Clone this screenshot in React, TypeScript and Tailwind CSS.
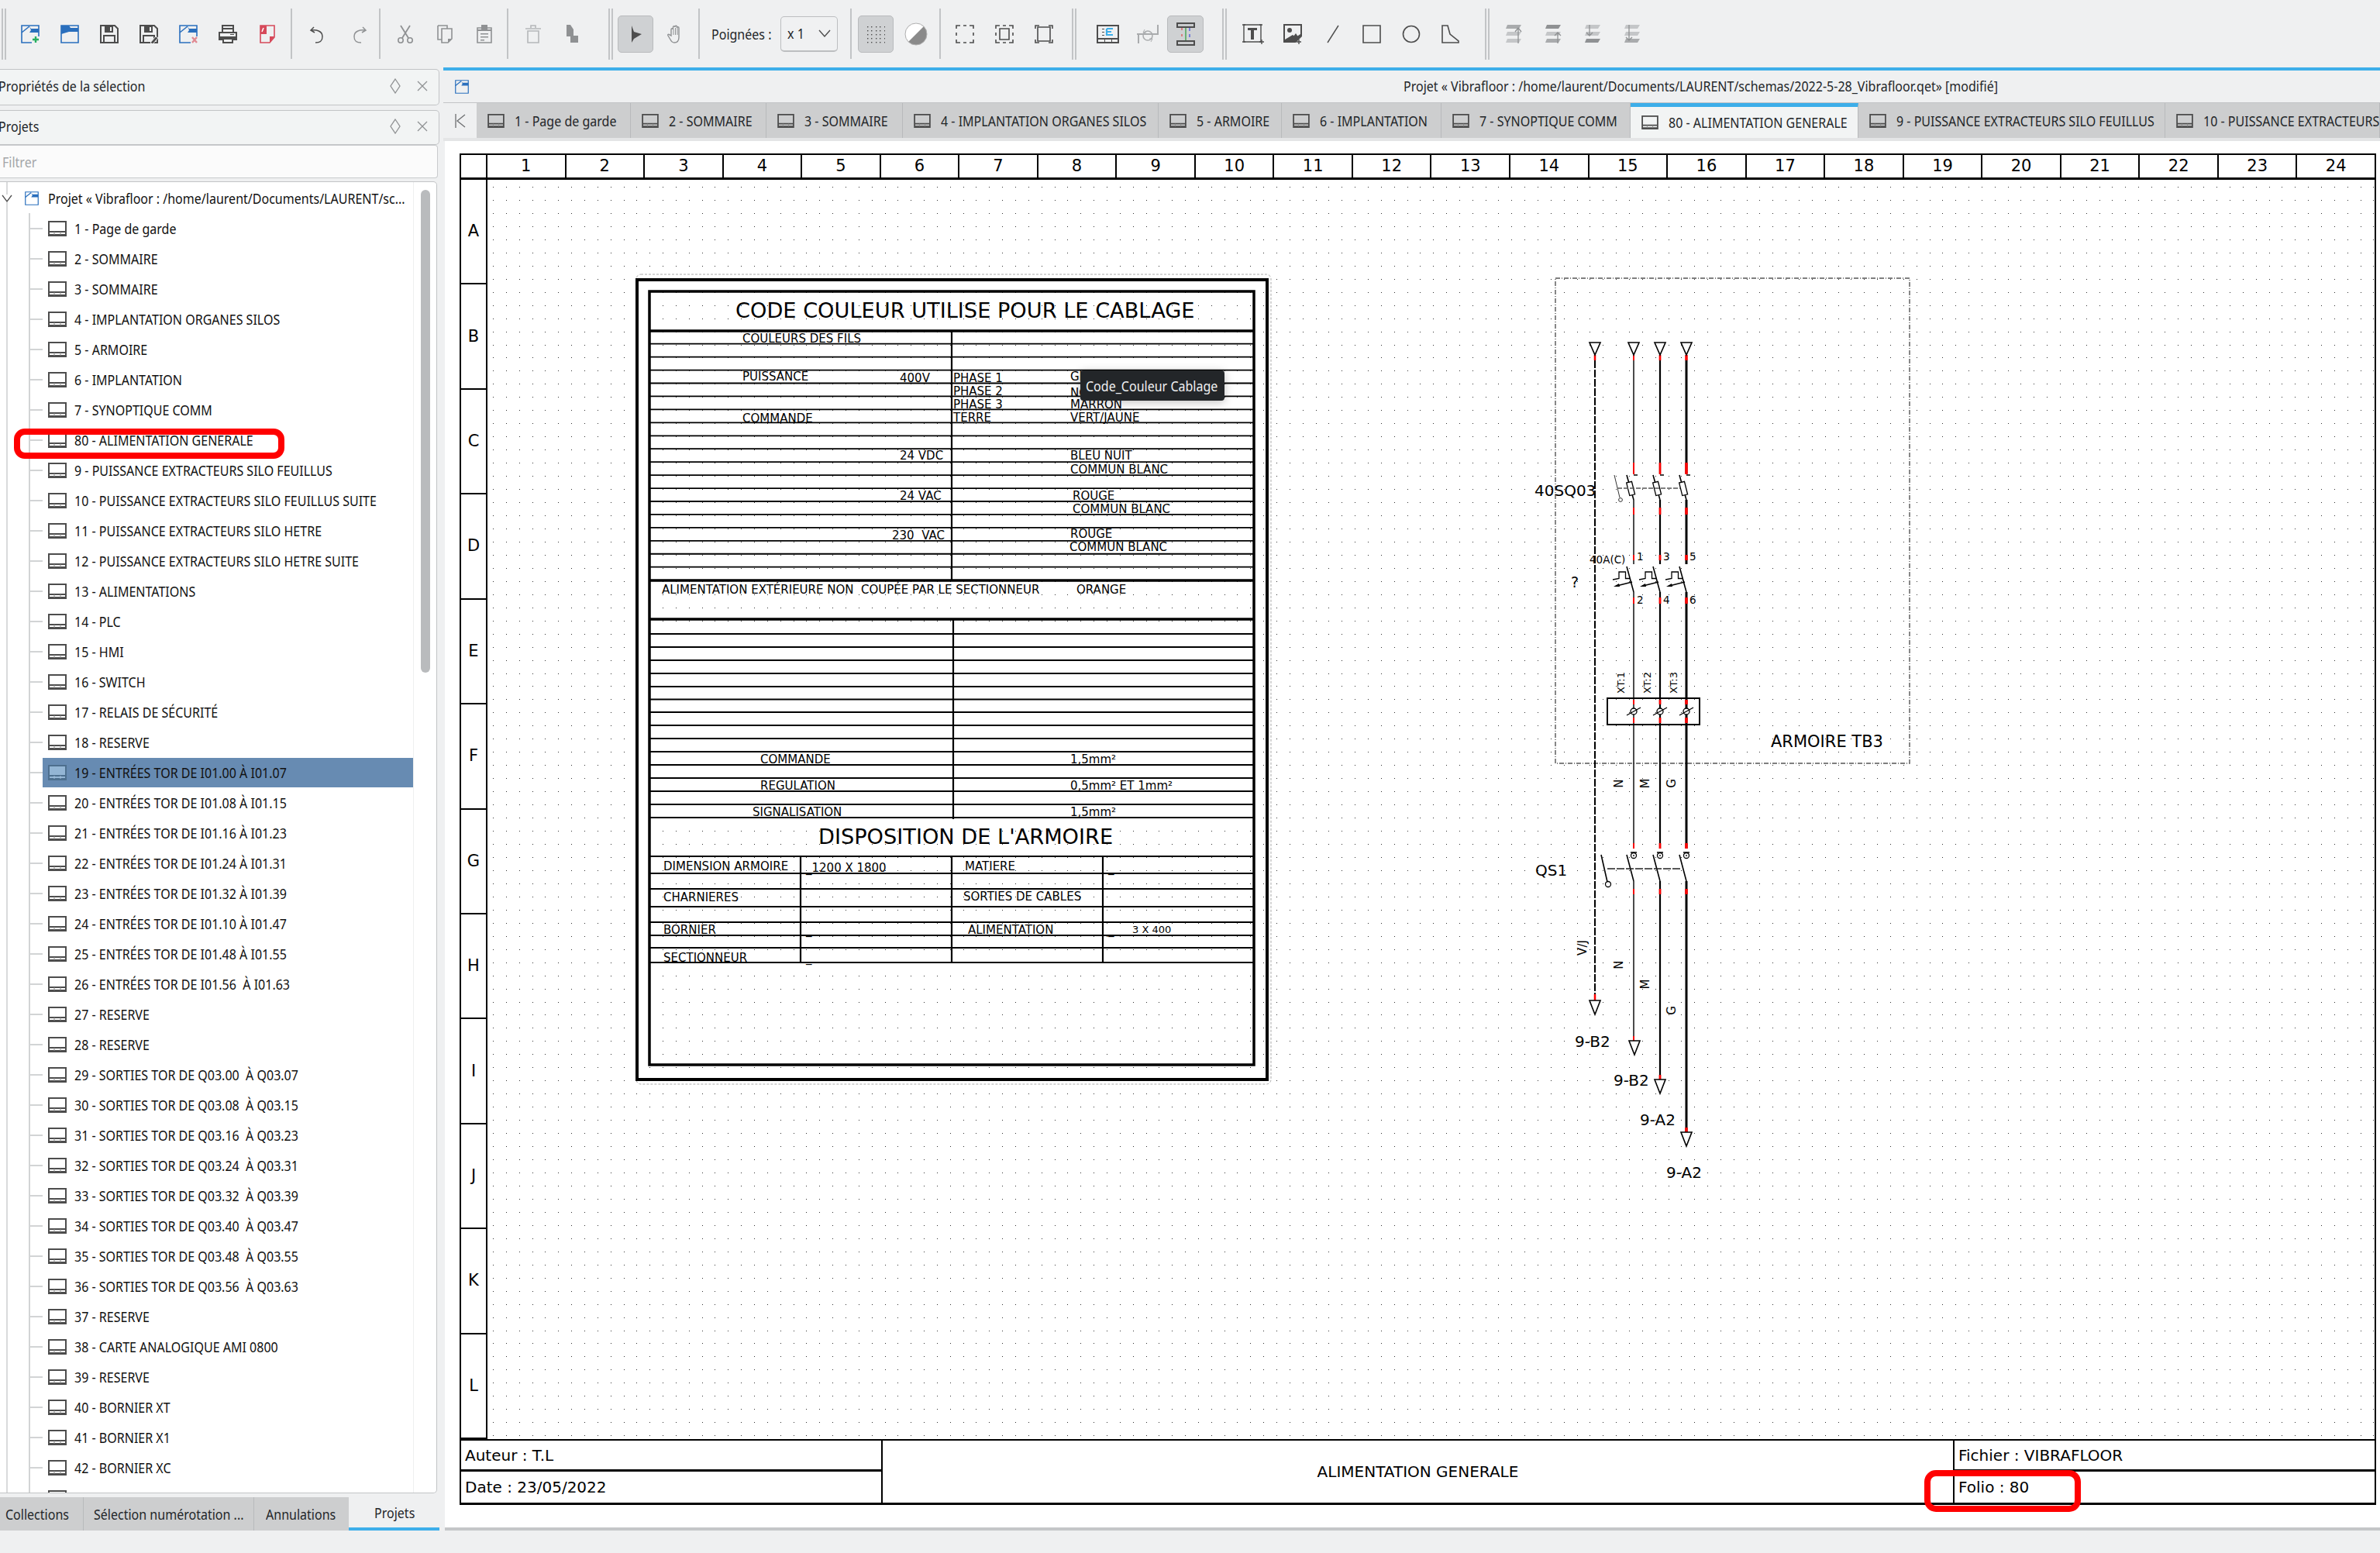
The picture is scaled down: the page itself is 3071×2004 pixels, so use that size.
import React from "react";

const PAGES = [
  "1 - Page de garde", "2 - SOMMAIRE", "3 - SOMMAIRE", "4 - IMPLANTATION ORGANES SILOS", "5 - ARMOIRE", "6 - IMPLANTATION",
  "7 - SYNOPTIQUE COMM", "80 - ALIMENTATION GENERALE", "9 - PUISSANCE EXTRACTEURS SILO FEUILLUS",
  "10 - PUISSANCE EXTRACTEURS SILO FEUILLUS SUITE", "11 - PUISSANCE EXTRACTEURS SILO HETRE",
  "12 - PUISSANCE EXTRACTEURS SILO HETRE SUITE", "13 - ALIMENTATIONS", "14 - PLC", "15 - HMI", "16 - SWITCH",
  "17 - RELAIS DE SÉCURITÉ", "18 - RESERVE", "19 - ENTRÉES TOR DE I01.00 À I01.07", "20 - ENTRÉES TOR DE I01.08 À I01.15",
  "21 - ENTRÉES TOR DE I01.16 À I01.23", "22 - ENTRÉES TOR DE I01.24 À I01.31", "23 - ENTRÉES TOR DE I01.32 À I01.39",
  "24 - ENTRÉES TOR DE I01.10 À I01.47", "25 - ENTRÉES TOR DE I01.48 À I01.55", "26 - ENTRÉES TOR DE I01.56  À I01.63",
  "27 - RESERVE", "28 - RESERVE", "29 - SORTIES TOR DE Q03.00  À Q03.07", "30 - SORTIES TOR DE Q03.08  À Q03.15",
  "31 - SORTIES TOR DE Q03.16  À Q03.23", "32 - SORTIES TOR DE Q03.24  À Q03.31", "33 - SORTIES TOR DE Q03.32  À Q03.39",
  "34 - SORTIES TOR DE Q03.40  À Q03.47", "35 - SORTIES TOR DE Q03.48  À Q03.55", "36 - SORTIES TOR DE Q03.56  À Q03.63",
  "37 - RESERVE", "38 - CARTE ANALOGIQUE AMI 0800", "39 - RESERVE", "40 - BORNIER XT", "41 - BORNIER X1", "42 - BORNIER XC", "",
];

const TABS: [string, string][] = [
  ["1 - Page de garde", "w-[199px]"], ["2 - SOMMAIRE", "w-[175px]"], ["3 - SOMMAIRE", "w-[176px]"],
  ["4 - IMPLANTATION ORGANES SILOS", "w-[330px]"], ["5 - ARMOIRE", "w-[159px]"], ["6 - IMPLANTATION", "w-[206px]"],
  ["7 - SYNOPTIQUE COMM", "w-[244px]"], ["80 - ALIMENTATION GENERALE", "w-[294px]"],
  ["9 - PUISSANCE EXTRACTEURS SILO FEUILLUS", "w-[396px]"], ["10 - PUISSANCE EXTRACTEURS SILO FEUILLUS SUITE", "w-[277px]"],
];

// labels of the colour table: x, baseline, text
const TABLE_TEXT: [number, number, string][] = [
  [958, 441, "COULEURS DES FILS"], [958, 490, "PUISSANCE"], [1161, 492, "400V"], [1230, 492, "PHASE 1"], [1381, 490, "GRIS"],
  [1230, 509, "PHASE 2"], [1381, 511, "NOIR"], [1230, 526, "PHASE 3"], [1381, 526, "MARRON"], [958, 544, "COMMANDE"],
  [1230, 543, "TERRE"], [1381, 543, "VERT/JAUNE"], [1161, 592, "24 VDC"], [1381, 592, "BLEU NUIT"], [1381, 610, "COMMUN BLANC"],
  [1161, 644, "24 VAC"], [1384, 644, "ROUGE"], [1384, 661, "COMMUN BLANC"], [1151, 695, "230  VAC"], [1381, 693, "ROUGE"],
  [1380, 710, "COMMUN BLANC"], [854, 765, "ALIMENTATION EXTÉRIEURE NON  COUPÉE PAR LE SECTIONNEUR"], [1389, 765, "ORANGE"],
  [981, 984, "COMMANDE"], [1381, 984, "1,5mm²"], [981, 1018, "REGULATION"], [1381, 1018, "0,5mm² ET 1mm²"],
  [971, 1052, "SIGNALISATION"], [1381, 1052, "1,5mm²"], [856, 1122, "DIMENSION ARMOIRE"], [1040, 1124, "_1200 X 1800"],
  [1245, 1122, "MATIERE"], [1430, 1124, "_"], [856, 1162, "CHARNIERES"], [1040, 1165, "_"], [1243, 1161, "SORTIES DE CABLES"],
  [1430, 1165, "_"], [856, 1204, "BORNIER"], [1040, 1204, "_"], [1249, 1204, "ALIMENTATION"], [1430, 1204, "_"],
  [1461, 1203, "3 X 400"], [856, 1240, "SECTIONNEUR"], [1040, 1240, "_"],
];

const ROW_LINES = [
  ...Array.from({ length: 18 }, (_, i) => 442.7 + i * 16.94),
  817, 834, 851, 868, 885, 901.5, 918, 935, 952, 969, 986, 1003, 1020, 1037, 1054, 1126, 1146, 1169, 1189, 1206, 1222, 1241,
];

const DOTS = (() => {
  let d = "";
  for (let i = 0; i < 145; i++) {
    for (let j = 0; j < 96; j++) {
      d += `M${Math.round(636 + i * 16.85)} ${Math.round(240 + j * 16.96)}h1v1h-1z`;
    }
  }
  return d;
})();

const Txt = ({ children, className = "" }: { children: React.ReactNode; className?: string }) => (
  <span className={`inline-block origin-left scale-x-[0.89] whitespace-pre text-[18px] leading-[24px] font-['Noto_Sans',sans-serif] ${className}`}>
    {children}
  </span>
);

const PageIcon = ({ selected = false, small = false }: { selected?: boolean; small?: boolean }) => (
  <svg viewBox="0 0 24 20" className={small ? "w-[22px] h-[18px] shrink-0" : "w-[24px] h-[20px] shrink-0"}>
    <rect x="1" y="1" width="22" height="18" fill={selected ? "#93b5d4" : "none"} stroke={selected ? "#4d6f8e" : "#4d4d4d"} strokeWidth="2" />
    <path d="M1 14h22M1 18h22" stroke={selected ? "#4d6f8e" : "#4d4d4d"} strokeWidth="2" />
    <path d="M8 14v4M16 14v4" stroke={selected ? "#9fbcd6" : "#888"} strokeWidth="1" />
  </svg>
);

const I = ({ children }: { children: React.ReactNode }) => (
  <svg viewBox="0 0 24 24" className="w-[24px] h-[24px]" fill="none">{children}</svg>
);

const ProjectShape = ({ solid = false }: { solid?: boolean }) => (
  <>
    <path d="M1 1h22v22H1z" stroke="#2a6fbd" strokeWidth="1.6" fill="none" />
    <path d={solid ? "M1 1h10l2 3h10v5H11L1 12z" : "M11 2l2 3h10v5H11l2-3z"} fill="#2a6fbd" />
    {!solid && <path d="M1 10l10-8" stroke="#2a6fbd" strokeWidth="1.6" />}
  </>
);

const Floppy = () => (
  <>
    <path d="M1 1h18l4 4v18H1z" stroke="#4d4d4d" strokeWidth="2" />
    <path d="M6 1h11v9H6z" fill="#4d4d4d" />
    <path d="M13 3h2v5h-2z" fill="#eff0f1" />
    <path d="M5 23V14h14v9" stroke="#4d4d4d" strokeWidth="2" />
  </>
);

const IconNew = () => <I><ProjectShape /><path d="M14 15h10v9H14z" fill="#eff0f1" /><path d="M15 19h8M19 15v8" stroke="#27ae60" strokeWidth="2.4" /></I>;
const IconOpen = () => <I><ProjectShape solid /></I>;
const IconSave = () => <I><Floppy /></I>;
const IconSaveAs = () => <I><Floppy /><path d="M14 23l7-8 3 2-7 8z" fill="#4d4d4d" stroke="#eff0f1" /></I>;
const IconClose = () => <I><ProjectShape /><path d="M15 15h9v9h-9z" fill="#eff0f1" /><path d="M17 16l6 7M23 16l-6 7" stroke="#e08a92" strokeWidth="2.4" /></I>;
const IconPrint = () => (
  <I>
    <path d="M5 9V1h14v8M5 5h14" stroke="#4d4d4d" strokeWidth="2" />
    <path d="M0 9h24v11h-5v-3H5v3H0z" fill="#4d4d4d" />
    <path d="M2 11h20v5H2z" fill="#eff0f1" />
    <path d="M15 12h5v1h-5zM2 15h20v2H2z" fill="#4d4d4d" />
    <path d="M6 18h12v5H6z" stroke="#4d4d4d" strokeWidth="2" />
  </I>
);
const IconPdf = () => (
  <I>
    <path d="M3 1h18v15l-6 7H3z" stroke="#d6495a" strokeWidth="1.6" />
    <path d="M3 1h8v11H3zM15 15h6l-6 8z" fill="#d6495a" />
    <path d="M7 4L5 9" stroke="#fff" strokeWidth="1.5" />
  </I>
);
const IconUndo = () => (
  <I><path d="M6 3L2 7l5 3M3 7c6-1 14 1 14 8s-4 8-9 8" stroke="#4d4d4d" strokeWidth="1.5" /></I>
);
const IconRedo = () => (
  <I><path d="M18 3l4 4-5 3M21 7c-6-1-14 1-14 8s4 8 9 8" stroke="#8f9193" strokeWidth="1.5" /></I>
);
const IconCut = () => (
  <I>
    <path d="M6 1l10 16M18 1L8 17" stroke="#8f9193" strokeWidth="1.8" />
    <circle cx="6" cy="20" r="3.2" stroke="#8f9193" strokeWidth="1.6" />
    <circle cx="18" cy="20" r="3.2" stroke="#8f9193" strokeWidth="1.6" />
  </I>
);
const IconCopy = () => (
  <I>
    <path d="M3 1h12v4M3 1v18h5" stroke="#8f9193" strokeWidth="1.6" />
    <path d="M8 5h13v13l-5 5H8z" stroke="#8f9193" strokeWidth="1.6" fill="#eff0f1" />
    <path d="M16 23v-5h5z" fill="#8f9193" />
  </I>
);
const IconPaste = () => (
  <I>
    <path d="M3 4h18v19H3z" stroke="#8f9193" strokeWidth="1.6" />
    <path d="M8 0h8v6H8z" fill="#8f9193" />
    <path d="M3 6h18v2H3zM7 11h10v1.5H7zM7 15h10v1.5H7zM7 19h5v1.5H7z" fill="#8f9193" />
  </I>
);
const IconTrash = () => (
  <I>
    <path d="M2 5h20M9 4V1h6v3" stroke="#b5b7b9" strokeWidth="1.6" />
    <path d="M5 8h14v15H5z" stroke="#b5b7b9" strokeWidth="1.6" />
  </I>
);
const IconRotate = () => (
  <I>
    <path d="M4 0h5l4 6v9H4z" fill="#8f9193" />
    <path d="M9 14h10v9H9z" fill="#8f9193" />
  </I>
);
const IconPointer = () => <I><path d="M7 1v22l3-5 10-6-10-3z" fill="#4d4d4d" /></I>;
const IconHand = () => (
  <I>
    <path d="M6 14V6a1.2 1.2 0 012.5 0V3a1.2 1.2 0 012.5 0v-.5a1.2 1.2 0 012.5 0V4a1.2 1.2 0 012.5 0v12c0 4-2 7-6 7-3 0-4-2-5-4l-3-5c-1-2 1-2 2-1z" stroke="#8f9193" strokeWidth="1.4" />
    <path d="M9 6v7M11.5 4v9M14 4v9" stroke="#8f9193" strokeWidth="1" />
  </I>
);
const IconGrid = () => (
  <I>
    {[2, 7, 12, 17, 22].map((y) => [1, 6, 12, 17, 23].map((x) => <rect key={`${x}${y}`} x={x} y={y} width="1.4" height="1.4" fill="#4d4d4d" />))}
  </I>
);
const IconDisc = () => (
  <svg viewBox="0 0 30 30" className="w-[30px] h-[30px]">
    <circle cx="15" cy="15" r="14" fill="#8a8a8a" />
    <path d="M25 5A14 14 0 005 25z" fill="#fff" />
    <circle cx="15" cy="15" r="14" fill="none" stroke="#b0b0b0" />
  </svg>
);
const Corners = () => (
  <path d="M1 5V1h5M18 1h5v4M23 19v4h-5M6 23H1v-4M10 1h4M10 23h4M1 10v4M23 10v4" stroke="#4d4d4d" strokeWidth="1.6" />
);
const IconSelect = () => <I><Corners /></I>;
const IconSelectIn = () => <I><Corners /><path d="M6 5h12v14H6z" stroke="#4d4d4d" strokeWidth="1.6" /></I>;
const IconSelectFit = () => <I><path d="M1 5V1h5M18 1h5v4M23 19v4h-5M6 23H1v-4" stroke="#4d4d4d" strokeWidth="1.6" /><path d="M4 3h16v18H4z" stroke="#4d4d4d" strokeWidth="1.6" /></I>;
const IconSummary = () => (
  <svg viewBox="0 0 29 24" className="w-[29px] h-[24px]">
    <rect x="1" y="1" width="27" height="22" fill="none" stroke="#4d4d4d" strokeWidth="2" />
    <path d="M0 17h29v7H0z" fill="#4d4d4d" />
    <path d="M2 19h8v3H2zM11 19h8v3h-8zM20 19h7v3h-7z" fill="#eff0f1" />
    <path d="M13 5h8M13 5v9M13 9h6M13 13h8" stroke="#3daee9" strokeWidth="2.2" fill="none" />
    <path d="M7 5h3v1H7zM7 9h3v1H7zM7 13h3v1H7z" fill="#4d4d4d" />
  </svg>
);
const IconLink = () => (
  <svg viewBox="0 0 28 24" className="w-[28px] h-[24px]">
    <path d="M0 12h28M2 12v12M27 12V0" stroke="#a9abad" strokeWidth="2" fill="none" />
    <circle cx="14" cy="14" r="6" fill="none" stroke="#a9abad" strokeWidth="1.5" />
    <path d="M10 6l-2 4 4 0M18 22l2-4-4 0" stroke="#a9abad" strokeWidth="1" fill="none" />
  </svg>
);
const IconConductors = () => (
  <svg viewBox="0 0 26 32" className="w-[26px] h-[32px]">
    <path d="M1 1h24v7H1zM1 24h24v7H1z" fill="#4d4d4d" />
    <path d="M3 3h20v3H3zM3 26h20v3H3z" fill="#c9cbcd" />
    <path d="M8 8v16" stroke="#e03030" strokeWidth="1" strokeDasharray="3 5" />
    <path d="M13 8v16" stroke="#2a9d3a" strokeWidth="1.2" />
    <path d="M18 8v16" stroke="#2030e0" strokeWidth="1" strokeDasharray="4 4" />
  </svg>
);
const IconText = () => (
  <svg viewBox="0 0 28 28" className="w-[28px] h-[28px]">
    <path d="M2 2h22v22H2z" fill="none" stroke="#4d4d4d" strokeWidth="1.4" />
    <path d="M7 6h12v3h-4v12h-4V9H7z" fill="#4d4d4d" />
    <path d="M0 2h4M0 24h4M22 2h4M22 24h6M25 21v6" stroke="#4d4d4d" strokeWidth="1.4" />
  </svg>
);
const IconImage = () => (
  <svg viewBox="0 0 24 26" className="w-[24px] h-[26px]">
    <path d="M0 0h24v16l-8 8H0z" fill="#4d4d4d" />
    <path d="M2 2h20v11l-6 4-4-3-10 6z" fill="#eff0f1" />
    <circle cx="8" cy="8" r="3" fill="#4d4d4d" />
    <path d="M10 20l6-8 4 6" fill="#4d4d4d" />
    <path d="M20 20v6M17 23h6" stroke="#4d4d4d" strokeWidth="1.4" />
  </svg>
);
const IconLine = () => <I><path d="M6 23L20 1" stroke="#4d4d4d" strokeWidth="1.4" /></I>;
const IconRect = () => <I><path d="M1 1h22v22H1z" stroke="#4d4d4d" strokeWidth="1.6" /></I>;
const IconEllipse = () => <I><circle cx="12" cy="12" r="10.5" stroke="#4d4d4d" strokeWidth="1.6" /></I>;
const IconPolygon = () => <I><path d="M1 1h7l3 11 11 9v2H1z" stroke="#4d4d4d" strokeWidth="1.6" /></I>;
const Slab = ({ y, c }: { y: number; c: string }) => <path d={`M3 ${y}h18l-3 5H1z`} fill={c} />;
const IconRaiseTop = () => <I><Slab y={0} c="#a9abad" /><Slab y={9} c="#c4c6c8" /><Slab y={18} c="#c4c6c8" /><path d="M17 24V4M13 9l4-5 4 5" stroke="#8f9193" strokeWidth="1.3" /></I>;
const IconRaise = () => <I><Slab y={0} c="#8f9193" /><Slab y={9} c="#c4c6c8" /><Slab y={18} c="#a9abad" /><path d="M17 24V10M13 14l4-4 4 4" stroke="#8f9193" strokeWidth="1.3" /></I>;
const IconLower = () => <I><Slab y={0} c="#c4c6c8" /><Slab y={9} c="#c4c6c8" /><Slab y={18} c="#8f9193" /><path d="M7 0v14M3 10l4 4 4-4" stroke="#8f9193" strokeWidth="1.3" /></I>;
const IconLowerBottom = () => <I><Slab y={0} c="#c4c6c8" /><Slab y={9} c="#c4c6c8" /><Slab y={18} c="#a9abad" /><path d="M7 0v20M3 16l4 4 4-4" stroke="#8f9193" strokeWidth="1.3" /></I>;

const Btn = ({ children, w = "w-[51px]" }: { children: React.ReactNode; w?: string }) => (
  <div className={`${w} h-[48px] flex items-center justify-center shrink-0`}>{children}</div>
);
const Active = ({ children, w }: { children: React.ReactNode; w: string }) => (
  <div className={`${w} h-[48px] flex items-center justify-center shrink-0 rounded-[5px] bg-[#cfd1d3] border border-[#b9bbbd]`}>{children}</div>
);
const Sep = ({ className = "" }: { className?: string }) => <div className={`w-[2px] h-[65px] bg-[#c2c4c6] shrink-0 ${className}`} />;
const Sep2 = ({ className = "" }: { className?: string }) => (
  <div className={`w-[6px] h-[66px] border-x-2 border-[#c2c4c6] shrink-0 ${className}`} />
);

function Toolbar() {
  return (
    <div className="h-[87px] flex items-center shrink-0 pl-[2px]">
      <Sep2 className="mr-[5px]" />
      <Btn><IconNew /></Btn><Btn><IconOpen /></Btn><Btn><IconSave /></Btn><Btn><IconSaveAs /></Btn>
      <Btn><IconClose /></Btn><Btn><IconPrint /></Btn><Btn><IconPdf /></Btn>
      <Sep className="ml-[5px] mr-[8px]" />
      <Btn><IconUndo /></Btn><Btn><IconRedo /></Btn>
      <Sep className="ml-[2px] mr-[6px]" />
      <Btn><IconCut /></Btn><Btn><IconCopy /></Btn><Btn><IconPaste /></Btn>
      <Sep className="ml-[4px] mr-[6px]" />
      <Btn><IconTrash /></Btn><Btn><IconRotate /></Btn>
      <Sep2 className="ml-[21px] mr-[6px]" />
      <Active w="w-[46px]"><IconPointer /></Active>
      <Btn w="w-[58px]"><IconHand /></Btn>
      <Sep className="mr-[15px]" />
      <Txt className="w-[89px] text-[#232629]">Poignées :</Txt>
      <div className="w-[74px] h-[46px] rounded-[5px] border border-[#bcbec0] border-b-2 bg-[#f0f1f2] flex items-center justify-between pl-[8px] pr-[8px] shrink-0">
        <Txt className="text-[#232629] w-[20px]">x 1</Txt>
        <svg viewBox="0 0 16 10" className="w-[16px] h-[10px]"><path d="M1 1l7 8 7-8" fill="none" stroke="#4d4d4d" strokeWidth="1.4" /></svg>
      </div>
      <Sep className="ml-[16px] mr-[8px]" />
      <Active w="w-[46px]"><IconGrid /></Active>
      <Btn w="w-[57px]"><IconDisc /></Btn>
      <Sep className="ml-[2px] mr-[5px]" />
      <Btn><IconSelect /></Btn><Btn><IconSelectIn /></Btn><Btn><IconSelectFit /></Btn>
      <Sep2 className="ml-[11px] mr-[15px]" />
      <Btn><IconSummary /></Btn><Btn><IconLink /></Btn>
      <Active w="w-[47px]"><IconConductors /></Active>
      <Sep2 className="ml-[24px] mr-[8px]" />
      <Btn><IconText /></Btn><Btn><IconImage /></Btn><Btn><IconLine /></Btn><Btn><IconRect /></Btn><Btn><IconEllipse /></Btn><Btn><IconPolygon /></Btn>
      <Sep2 className="ml-[19px] mr-[6px]" />
      <Btn><IconRaiseTop /></Btn><Btn><IconRaise /></Btn><Btn><IconLower /></Btn><Btn><IconLowerBottom /></Btn>
    </div>
  );
}

const DockTitle = ({ title, h }: { title: string; h: string }) => (
  <div className={`${h} flex items-center justify-between pr-[14px] border border-l-0 border-[#c2c4c6] rounded-r-[5px] bg-[#f2f4f4] shrink-0`}>
    <Txt className="text-[#232629] ml-[-2px] mb-[4px]">{title}</Txt>
    <div className="flex items-center gap-[21px] mb-[4px]">
      <svg viewBox="0 0 14 20" className="w-[14px] h-[20px]"><path d="M7 1l6 9-6 9-6-9z" fill="none" stroke="#8f9193" strokeWidth="1.3" /></svg>
      <svg viewBox="0 0 14 14" className="w-[14px] h-[14px]"><path d="M1 1l12 12M13 1L1 13" stroke="#8f9193" strokeWidth="1.3" /></svg>
    </div>
  </div>
);

function TreeRow({ label, selected }: { label: string; selected: boolean }) {
  return (
    <div className="h-[39px] flex items-center">
      <div className="w-[16px] h-[2px] bg-[#d2d4d5] shrink-0" />
      <div className={`flex-1 h-[38px] flex items-center pl-[7px] gap-[10px] ${selected ? "bg-[#678bb2]" : ""}`}>
        <PageIcon selected={selected} />
        {label && <Txt className="text-[#111]">{label}</Txt>}
      </div>
    </div>
  );
}

function Dock() {
  return (
    <div className="w-[572px] flex flex-col pt-[2px] pr-[5px] shrink-0">
      <DockTitle title="Propriétés de la sélection" h="h-[47px]" />
      <div className="mt-[6px]"><DockTitle title="Projets" h="h-[45px]" /></div>
      <div className="h-[43px] mr-[2px] bg-[#fbfbfb] border border-l-0 border-[#c9cbcd] rounded-r-[4px] flex items-center pl-[3px] shrink-0">
        <Txt className="text-[#a4a6a8]">Filtrer</Txt>
      </div>
      <div className="mt-[4px] h-[1693px] mr-[3px] bg-white border border-l-0 border-[#c2c4c6] rounded-r-[5px] flex overflow-hidden shrink-0">
        <div className="w-[533px] shrink-0 overflow-hidden relative">
          <div className="absolute left-[8px] top-0 bottom-0 w-[2px] bg-[#d9dadb]" />
          <div className="h-[39px] mt-[1px] flex items-center relative">
            <svg viewBox="0 0 14 10" className="w-[14px] h-[10px] ml-[2px] bg-white shrink-0"><path d="M1 1l6 8 6-8" fill="none" stroke="#4d4d4d" strokeWidth="1.3" /></svg>
            <svg viewBox="0 0 24 24" className="w-[18px] h-[18px] ml-[16px] shrink-0"><ProjectShape /></svg>
            <Txt className="ml-[12px] text-[#111] shrink-0">Projet « Vibrafloor : /home/laurent/Documents/LAURENT/sc...</Txt>
          </div>
          <div className="ml-[37px] border-l-2 border-[#d2d4d5]">
            {PAGES.map((p, i) => <TreeRow key={i} label={p} selected={i === 18} />)}
          </div>
        </div>
        <div className="flex-1 border-l border-[#eeeff0] pl-[9px] pt-[10px]">
          <div className="w-[12px] h-[623px] rounded-full bg-[#b9bbbd]" />
        </div>
      </div>
      <div className="mt-[5px] h-[43px] flex items-stretch text-[#232629] shrink-0">
        <div className="w-[109px] bg-[#cdcecf] border-r border-[#b8babc] flex items-center pl-[7px] overflow-hidden"><Txt>Collections</Txt></div>
        <div className="w-[221px] bg-[#cdcecf] border-r border-[#b8babc] flex items-center pl-[13px] overflow-hidden"><Txt>Sélection numérotation ...</Txt></div>
        <div className="w-[122px] bg-[#cdcecf] flex items-center pl-[15px] overflow-hidden"><Txt>Annulations</Txt></div>
        <div className="w-[118px] bg-[#eff0f1] border-b-4 border-[#3daee9] flex items-center pl-[33px]"><Txt>Projets</Txt></div>
      </div>
    </div>
  );
}

function Phase({ x, w }: { x: number; w: number }) {
  return (
    <g>
      <path d={`M${x} 464V610M${x} 644V727M${x} 763V1094M${x} 1136V${x === 2108 ? 1342 : x === 2142 ? 1392 : 1460}`} stroke="#000" strokeWidth={w} fill="none" />
      <path d={`M${x} 457V464M${x} 596V611M${x} 654V663M${x} 715V722M${x} 770V778M${x} 902V908M${x} 925V932M${x} 1087V1094M${x} 1146V1153M${x} ${x === 2108 ? 1336 : x === 2142 ? 1386 : 1454}v7`} stroke="#f00" strokeWidth={w + 0.5} fill="none" />
      <path d={`M${x - 7} 441h14l-7 16z`} fill="#fff" stroke="#000" strokeWidth="1.6" />
      <path d={`M${x} 612h5M${x - 9} 612L${x} 644`} stroke="#000" strokeWidth="1.6" fill="none" />
      <rect x={x - 7.5} y={621} width="7" height="17" fill="#fff" stroke="#000" strokeWidth="1.3" transform={`rotate(-14 ${x - 4} 629)`} />
      <path d={`M${x - 9} 730L${x} 763`} stroke="#000" strokeWidth="1.6" />
      <path d={`M${x - 27} 747l8-1.5V737h8.5v8.5h6`} stroke="#000" strokeWidth="1.3" fill="none" />
      <path d={`M${x - 2} 750l-20 5`} stroke="#000" strokeWidth="1.5" />
      <path d={`M${x - 26} 756l7-4 1 4z`} fill="#000" />
      <circle cx={x} cy="917" r="4" fill="#fff" stroke="#000" strokeWidth="1.3" />
      <path d={`M${x - 9} 922L${x + 9} 912`} stroke="#000" strokeWidth="1.3" />
      <circle cx={x} cy="1103" r="3.5" fill="#fff" stroke="#000" strokeWidth="1.3" />
      <circle cx={x} cy="1103" r="0.9" fill="#000" />
      <path d={`M${x - 4} 1099h8M${x - 9} 1102L${x} 1136`} stroke="#000" strokeWidth="1.6" fill="none" />
    </g>
  );
}

const Vert = ({ x, y, t, s = 15 }: { x: number; y: number; t: string; s?: number }) => (
  <text x={x} y={y} fontSize={s} textAnchor="middle" transform={`rotate(-90 ${x} ${y})`} dominantBaseline="central">{t}</text>
);

function Drawing() {
  const lower: [number, number][] = [[2058, 1290], [2109, 1342], [2142, 1392], [2176, 1460]];
  return (
    <svg viewBox="629 231 2435 1625" className="absolute inset-0 w-full h-full" fontFamily="'DejaVu Sans', sans-serif" fill="#000">
      <path d={DOTS} fill="#333" shapeRendering="crispEdges" />
      <rect x="821" y="353" width="819" height="1045" rx="6" fill="none" stroke="#aaa" strokeWidth="1" strokeDasharray="3 2" />
      <rect x="822" y="360" width="813" height="1032" fill="none" stroke="#000" strokeWidth="4" />
      <rect x="838" y="375" width="780" height="998" fill="none" stroke="#000" strokeWidth="3.5" />
      <path d="M838 426H1618M838 748H1618M838 798H1618" stroke="#000" strokeWidth="3.5" />
      <path d="M1228 426V748M1230 798V1056M1033 1104V1241M1228 1104V1241M1423 1104V1241" stroke="#000" strokeWidth="2.2" fill="none" />
      <path d="M838 1104H1618" stroke="#000" strokeWidth="2" />
      {ROW_LINES.map((y) => <path key={y} d={`M838 ${y}H1618`} stroke="#000" strokeWidth="1.8" />)}
      <text x="949" y="409" fontSize="27.2">CODE COULEUR UTILISE POUR LE CABLAGE</text>
      <text x="1056" y="1088" fontSize="27.2">DISPOSITION DE L'ARMOIRE</text>
      {TABLE_TEXT.map(([x, y, t], i) => (
        <text key={i} x={x} y={y} fontSize={t === "3 X 400" ? 13 : 15} style={{ whiteSpace: "pre" }}>{t}</text>
      ))}

      <rect x="2007" y="358" width="457" height="626" fill="none" stroke="#555" strokeWidth="1.4" strokeDasharray="6 2 1 2" />
      <path d="M2058 464V1284" stroke="#000" strokeWidth="2" strokeDasharray="10 2" />
      <path d="M2058 457V464M2058 1282V1290" stroke="#f00" strokeWidth="2.5" />
      <path d="M2051 441h14l-7 16z" fill="#fff" stroke="#000" strokeWidth="1.6" />
      <Phase x={2108} w={1.4} />
      <Phase x={2142} w={2.2} />
      <Phase x={2176} w={3} />
      {lower.map(([x, y]) => (
        <path key={x} d={`M${x - 7} ${y}h14l-7 18z`} fill="#fff" stroke="#000" strokeWidth="1.6" />
      ))}
      <path d="M2083 612L2090 641" stroke="#333" strokeWidth="1" />
      <circle cx="2091" cy="644" r="2.4" fill="#fff" stroke="#333" />
      <path d="M2087 629H2168" stroke="#555" strokeWidth="1.3" strokeDasharray="6 2" />
      <rect x="2074" y="900" width="119" height="34" fill="none" stroke="#000" strokeWidth="2" />
      <path d="M2066 1102L2074 1137" stroke="#000" strokeWidth="1.6" />
      <circle cx="2075" cy="1140" r="3.5" fill="#fff" stroke="#000" strokeWidth="1.3" />
      <path d="M2074 1120H2168" stroke="#222" strokeWidth="1.6" strokeDasharray="10 2" />
      <text x="1980" y="639" fontSize="20">40SQ03</text>
      <text x="2051" y="726" fontSize="13.5">40A(C)</text>
      <text x="2027" y="757" fontSize="19">?</text>
      <text x="2112" y="722" fontSize="13.5">1</text><text x="2146" y="722" fontSize="13.5">3</text><text x="2180" y="722" fontSize="13.5">5</text>
      <text x="2112" y="778" fontSize="13.5">2</text><text x="2146" y="778" fontSize="13.5">4</text><text x="2180" y="778" fontSize="13.5">6</text>
      <Vert x={2091} y={880} t="XT:1" s={13} /><Vert x={2125} y={880} t="XT:2" s={13} /><Vert x={2159} y={880} t="XT:3" s={13} />
      <text x="2285" y="963" fontSize="21">ARMOIRE TB3</text>
      <Vert x={2089} y={1010} t="N" /><Vert x={2123} y={1010} t="M" /><Vert x={2157} y={1010} t="G" />
      <Vert x={2089} y={1244} t="N" /><Vert x={2123} y={1269} t="M" /><Vert x={2157} y={1303} t="G" />
      <Vert x={2042} y={1222} t="V/J" />
      <text x="1981" y="1129" fontSize="20">QS1</text>
      <text x="2032" y="1350" fontSize="20">9-B2</text>
      <text x="2082" y="1400" fontSize="20">9-B2</text>
      <text x="2116" y="1451" fontSize="20">9-A2</text>
      <text x="2150" y="1519" fontSize="20">9-A2</text>
    </svg>
  );
}

function Folio() {
  const cols = Array.from({ length: 24 }, (_, i) => i + 1);
  const rows = "ABCDEFGHIJKL".split("");
  return (
    <div className="w-[2473px] border-l-2 border-t-2 border-r-2 border-black font-['DejaVu_Sans',sans-serif] text-black">
      <div className="h-[32px] flex border-b-[3px] border-black">
        <div className="w-[32px] shrink-0" />
        <div className="flex-1 grid grid-cols-[repeat(24,minmax(0,1fr))]">
          {cols.map((c) => (
            <div key={c} className="border-l-2 border-black flex items-center justify-center text-[21px] leading-none">{c}</div>
          ))}
        </div>
      </div>
      <div className="h-[1625px] flex">
        <div className="w-[32px] shrink-0 grid grid-rows-[repeat(12,minmax(0,1fr))]">
          {rows.map((r) => (
            <div key={r} className="border-b-2 border-black flex items-center justify-center text-[21px] leading-none">{r}</div>
          ))}
        </div>
        <div className="flex-1 relative border-l-2 border-black">
          <Drawing />
        </div>
      </div>
      <div className="h-[85px] grid grid-cols-[544px_1fr_544px] border-t-2 border-b-[3px] border-black text-[20px]">
        <div className="grid grid-rows-2 border-r-2 border-black">
          <div className="border-b-[3px] border-black flex items-center pl-[5px]">Auteur : T.L</div>
          <div className="flex items-center pl-[5px]">Date : 23/05/2022</div>
        </div>
        <div className="flex items-center justify-center">ALIMENTATION GENERALE</div>
        <div className="grid grid-rows-2 border-l-2 border-black">
          <div className="border-b-[3px] border-black flex items-center pl-[5px]">Fichier : VIBRAFLOOR</div>
          <div className="flex items-center pl-[5px]">Folio : 80</div>
        </div>
      </div>
    </div>
  );
}

function Main() {
  return (
    <div className="flex-1 flex flex-col min-w-0">
      <div className="h-[4px] bg-[#3daee9] shrink-0" />
      <div className="h-[41px] bg-[#eff0f1] flex items-center pl-[15px] shrink-0">
        <svg viewBox="0 0 24 24" className="w-[18px] h-[18px] shrink-0"><ProjectShape /></svg>
        <Txt className="ml-[1206px] mb-[2px] text-[#232629] shrink-0">Projet « Vibrafloor : /home/laurent/Documents/LAURENT/schemas/2022-5-28_Vibrafloor.qet» [modifié]</Txt>
      </div>
      <div className="h-[46px] flex shrink-0 overflow-hidden bg-[#eff0f1] border-t border-[#c2c4c6]">
        <div className="w-[43px] flex items-center justify-center shrink-0">
          <svg viewBox="0 0 14 18" className="w-[14px] h-[18px]"><path d="M1 0v18M13 1L3 9l10 8" fill="none" stroke="#6d6f71" strokeWidth="1.3" /></svg>
        </div>
        {TABS.map(([t, w], i) => (
          <div key={t} className={`${w} shrink-0 overflow-hidden flex items-center pl-[14px] gap-[13px] border-r border-[#b8babc] ${i === 7 ? "bg-[#f2f4f4] border-t-[5px] border-t-[#3daee9]" : "bg-[#cdcecf]"}`}>
            <PageIcon small />
            <Txt className="text-[#232629] shrink-0">{t}</Txt>
          </div>
        ))}
      </div>
      <div className="h-[4px] bg-[#e4e5e6] shrink-0" />
      <div className="flex-1 ml-[2px] bg-white pl-[19px] pt-[16px] border-b-4 border-[#c4c6c8] overflow-hidden">
        <Folio />
      </div>
    </div>
  );
}

export default function App() {
  return (
    <div className="relative w-[3071px] h-[2004px] bg-[#eff0f1] overflow-hidden flex flex-col">
      <Toolbar />
      <div className="h-[1888px] flex shrink-0">
        <Dock />
        <Main />
      </div>

      {/* tooltip and the red marks sit on top of everything */}
      <div className="absolute left-[1394px] top-[478px] w-[186px] h-[39px] rounded-[4px] bg-[#232629] text-[#eff0f1] flex items-center pl-[7px] shadow-[0_2px_12px_rgba(0,0,0,0.25)]">
        <Txt>Code_Couleur Cablage</Txt>
      </div>
      <div className="absolute left-[18px] top-[553px] w-[349px] h-[39px] rounded-[14px] border-[8px] border-[#ff0000]" />
      <div className="absolute left-[2483px] top-[1897px] w-[202px] h-[54px] rounded-[15px] border-[8px] border-[#ff0000]" />
    </div>
  );
}
